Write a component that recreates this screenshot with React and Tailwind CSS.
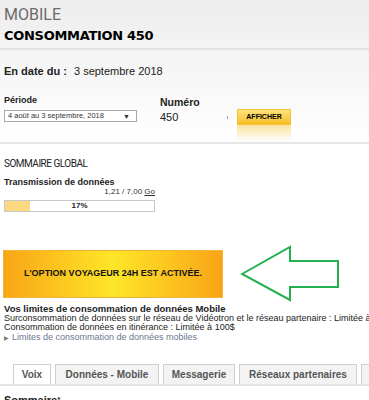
import React from "react";

const arial = { fontFamily: '"Liberation Sans", Arial, sans-serif' };

// --- ONGLETS ---
const tabs = [
    { label: "Voix", w: "w-[38px]", active: true },
    { label: "Données - Mobile", w: "w-[104px]" },
    { label: "Messagerie", w: "w-[72px]" },
    { label: "Réseaux partenaires", w: "w-[118px]" },
    { label: "Facturation", w: "w-[80px]" },
];

const GreenArrow = () => (
    <svg width="100" height="58" viewBox="0 0 100 58" className="shrink-0">
        <polygon
            points="2,29 50,2 50,16 98,16 98,42 50,42 50,55"
            fill="none"
            stroke="#22b14c"
            strokeWidth="2"
        />
    </svg>
);

export default function App() {
    const pct = 17;

    return (
        <div
            className="w-[369px] h-[400px] overflow-hidden bg-white text-[#222]"
            style={arial}
        >
            {/* EN-TETE */}
            <div className="bg-linear-to-b from-[#ededed] via-[#f6f6f6] to-white">
                <div className="px-1 pt-[5px]">
                    <div className="font-['Roboto',sans-serif] text-[16px] leading-[20px] text-[#6b6b6b]">
                        MOBILE
                    </div>
                    <div className="mt-[3px] pb-[4px] font-['DejaVu_Sans',sans-serif] font-bold text-[13px] leading-[16px] text-black tracking-[-0.3px]">
                        CONSOMMATION 450
                    </div>
                </div>
                <div className="h-[2px] bg-[#e2e2e2]" />

                <div className="px-1 mt-[14px] text-[11px] leading-[14px]">
                    <span className="font-bold">En date du :</span>
                    <span className="ml-[7px]">3 septembre 2018</span>
                </div>

                {/* PERIODE / NUMERO */}
                <div className="flex items-start mt-[16px] h-[48px]">
                    <div className="ml-1 w-[133px]">
                        <div className="font-bold text-[9px] leading-[12px]">Période</div>
                        <div className="mt-[4px] h-[12px] border border-[#a9a9a9] bg-white flex items-center justify-between pl-[3px] pr-[6px] text-[7.5px] leading-none text-[#333]">
                            <span>4 août au 3 septembre, 2018</span>
                            <span className="text-[7px]">▼</span>
                        </div>
                    </div>
                    <div className="ml-[23px] w-[57px] pt-[1px]">
                        <div className="font-bold text-[10.5px] leading-[14px]">Numéro</div>
                        <div className="mt-[1px] text-[11px] leading-[14px]">450</div>
                    </div>
                    <div className="mt-[22px] ml-[10px] w-px h-[3px] bg-[#7f9fd0]" />
                    <div className="ml-[9px] mt-[15px] w-[54px]">
                        <div className="h-[16px] border border-[#f2c23c] bg-linear-to-b from-[#fde27a] to-[#f7bf16] flex items-center justify-center font-bold text-[7px] text-black">
                            AFFICHER
                        </div>
                        <div className="h-[16px] bg-linear-to-b from-[#fbdc86] to-white/0 opacity-80" />
                    </div>
                </div>
            </div>
            <div className="h-[2px] bg-[#e6e6e6]" />

            {/* SOMMAIRE GLOBAL */}
            <div className="px-1 pt-[13px]">
                <div className="font-['Roboto',sans-serif] text-[10px] leading-[13px] tracking-[-0.5px] text-[#222]">
                    SOMMAIRE GLOBAL
                </div>
                <div className="mt-[6px] font-bold text-[9px] leading-[12px]">
                    Transmission de données
                </div>
                <div className="w-[151px] text-right text-[8px] leading-[10px] mt-[-1px] text-[#333]">
                    1,21 / 7,00 <span className="underline">Go</span>
                </div>
                <div className="relative mt-[3px] w-[151px] h-[12px] border border-[#c8c8c8] bg-white">
                    <div
                        className="h-full bg-[#fcd880]"
                        style={{ width: `${pct}%` }}
                    />
                    <div className="absolute inset-0 flex items-center justify-center font-bold text-[8px]">
                        {pct}%
                    </div>
                </div>
            </div>

            {/* BANNIERE VOYAGEUR */}
            <div className="flex items-center mt-[33px] pl-[3px] gap-[17px]">
                <div className="w-[220px] h-[48px] border border-[#f5b437] bg-linear-to-r from-[#f8a515] via-[#fde628] to-[#f8a515] flex items-center justify-center font-bold text-[9px] text-[#111]">
                    L'OPTION VOYAGEUR 24H EST ACTIVÉE.
                </div>
                <GreenArrow />
            </div>

            {/* LIMITES */}
            <div className="px-1 mt-[1px] text-[9px] leading-[9.6px] whitespace-nowrap">
                <div className="font-bold text-[9.5px]">
                    Vos limites de consommation de données Mobile
                </div>
                <div>
                    Surconsommation de données sur le réseau de Vidéotron et le réseau partenaire : Limitée à 100$
                </div>
                <div>Consommation de données en itinérance : Limitée à 100$</div>
                <div className="text-[#6b7893]">
                    <span className="text-[6px] text-[#777] mr-[3px]">▶</span>
                    Limites de consommation de données mobiles
                </div>
            </div>

            {/* ONGLETS */}
            <div className="mt-[21px] flex items-end gap-[4px] pl-[13px] border-b-2 border-[#e3e3e3] whitespace-nowrap">
                {tabs.map((t) => (
                    <div
                        key={t.label}
                        className={`${t.w} shrink-0 h-[20px] flex items-center justify-center border border-b-0 font-bold text-[10px] text-[#555] ${
                            t.active
                                ? "bg-white border-[#d0d0d0]"
                                : "bg-[#f3f3f3] border-[#cfcfcf]"
                        }`}
                    >
                        {t.label}
                    </div>
                ))}
            </div>

            <div className="px-1 mt-[7px] font-bold text-[11px] leading-[14px]">
                Sommaire<span className="text-[8px] align-top">*</span>
            </div>
        </div>
    );
}
